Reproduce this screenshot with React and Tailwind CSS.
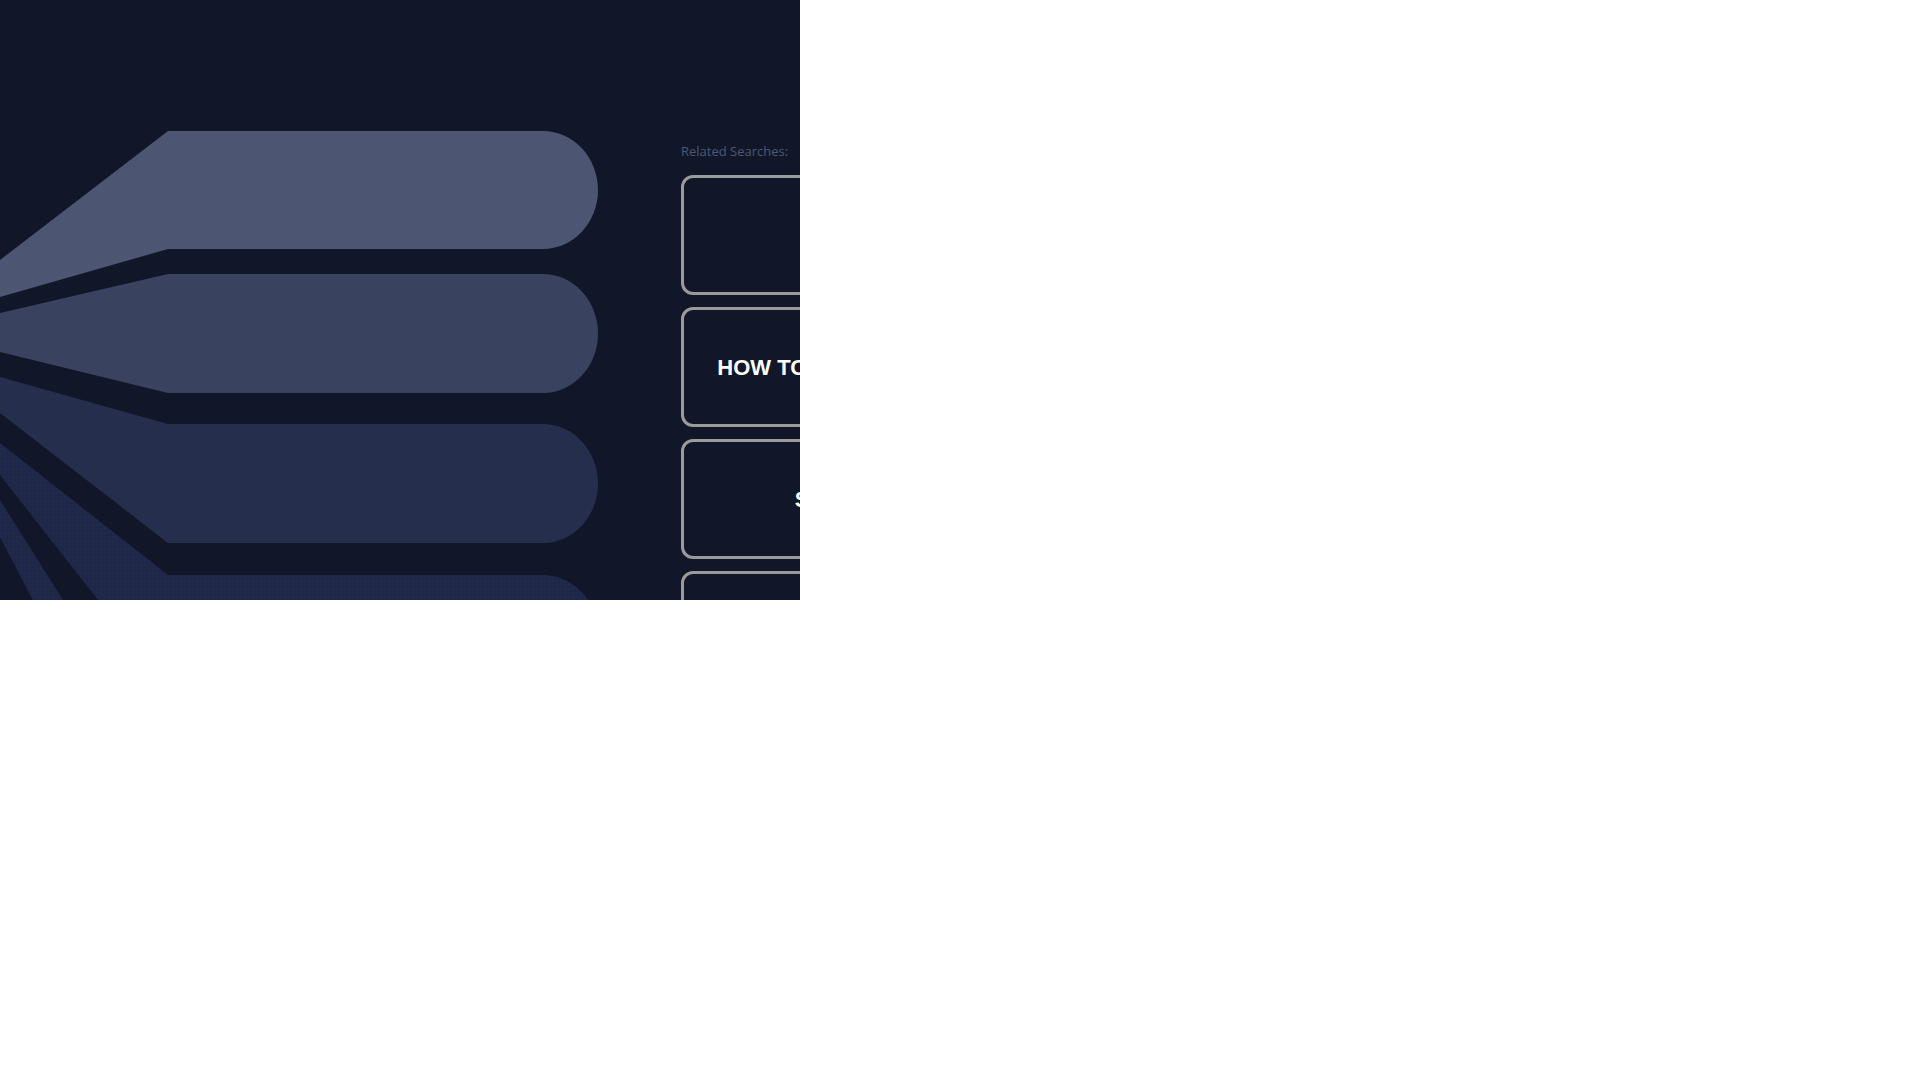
const searches = [
  "Online Courses",
  "HOW TO BUILD A WEBSITE FOR FREE",
  "SMALL BUSINESS IDEA",
  "Cloud Hosting Plans",
];

function FanLogo() {
  return (
    <svg width="600" height="600" viewBox="0 0 600 600" className="shrink-0 block">
      <defs>
        <pattern id="dots" width="4" height="4" patternUnits="userSpaceOnUse">
          <rect width="4" height="4" fill="#1e2747" />
          <circle cx="1" cy="1" r="0.6" fill="#2a3456" />
        </pattern>
      </defs>
      {/* stacked bars fanning out to the left */}
      <path d="M0 260 L168 131 L543 131 A55 59 0 0 1 543 249 L168 249 L0 297 Z" fill="#4c5673" />
      <path d="M0 313 L168 274 L543 274 A55 59.5 0 0 1 543 393 L168 393 L0 352 Z" fill="#394360" />
      <path d="M0 377 L168 424 L543 424 A55 59.5 0 0 1 543 543 L168 543 L0 413 Z" fill="#252e4c" />
      <path d="M0 443 L168 575 L543 575 A55 59.5 0 0 1 543 694 L172 694 L0 475 Z" fill="url(#dots)" />
      <path d="M0 500 L126 700 L85 700 L0 537 Z" fill="url(#dots)" />
    </svg>
  );
}

export default function App() {
  return (
    <div className="w-[800px] h-[600px] overflow-hidden bg-[#111729] flex" style={{ fontFamily: "'Liberation Sans', Arial, sans-serif" }}>
      <FanLogo />

      <div className="ml-[81px] w-[480px] shrink-0 pt-[143px]">
        <p className="text-[13px] leading-4 text-[#4d5875] mb-[16px]" style={{ fontFamily: "'Open Sans', sans-serif" }}>
          Related Searches:
        </p>
        <div className="flex flex-col gap-3">
          {searches.map((s) => (
            <div
              key={s}
              className="h-[120px] border-[3px] border-[#9b9b9b] rounded-[12px] flex items-center justify-center text-center"
            >
              <span className="text-white font-bold text-[22px] whitespace-nowrap">{s}</span>
            </div>
          ))}
        </div>
      </div>
    </div>
  );
}
